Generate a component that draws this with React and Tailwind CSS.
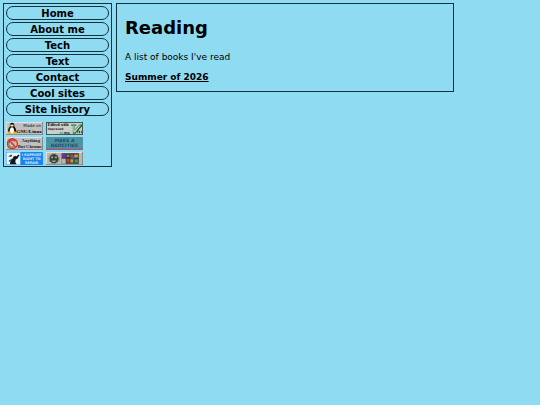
import React from "react";

const links = ["Home", "About me", "Tech", "Text", "Contact", "Cool sites", "Site history"];

function Badge({ label, children }) {
  return (
    <a href="#" aria-label={label} className="block">
      <svg viewBox="0 0 88 31" className="block w-[37px] h-[13px]">
        {children}
      </svg>
    </a>
  );
}

function Bevel({ fill = "#c0c0c0" }) {
  return (
    <>
      <rect width="88" height="31" fill="#707478" />
      <rect width="86" height="29" fill="#e8e8e8" />
      <rect x="2" y="2" width="84" height="27" fill={fill} />
    </>
  );
}

function LinuxBadge() {
  return (
    <Badge label="Made on GNU/Linux">
      <Bevel />
      <path d="M14 2c5 0 6 4 6 9 3 4 5 8 4 14H5c-1-6 1-10 4-14 0-5 1-9 5-9z" fill="#111" />
      <ellipse cx="14" cy="20" rx="5" ry="7" fill="#fff" />
      <circle cx="12" cy="8" r="2" fill="#fff" />
      <circle cx="16" cy="8" r="2" fill="#fff" />
      <path d="M10 11h8l-4 4z" fill="#f2b01e" />
      <path d="M3 27l4-6 5 5-2 3H4zM25 27l-4-6-4 5 1 3h6z" fill="#f2b01e" />
      <text x="84" y="11" textAnchor="end" fontSize="10" fontFamily="DejaVu Sans, sans-serif" fill="#111">Made on</text>
      <text x="85" y="27" textAnchor="end" fontSize="12" fontWeight="bold" fontFamily="Liberation Serif, serif" fill="#000">GNU/Linux</text>
    </Badge>
  );
}

function EditorBadge() {
  return (
    <Badge label="Edited with Improved Vi">
      <rect width="88" height="31" fill="#33423c" />
      <rect x="2" y="2" width="84" height="27" fill="#c9cfcb" />
      <path d="M60 6h12v3h-3v8L80 6h6v4L70 28h-6V9h-4z" fill="#176c2c" />
      <path d="M65 8h3v12L80 8h3L69 25h-4z" fill="#cbd5cd" />
      <path d="M75 19h2v8h-2zM79 21h2v6h-2zM83 21h2v6h-2z" fill="#123d1d" />
      <text x="4" y="10" fontSize="10" fontWeight="bold" fontFamily="Liberation Serif, serif" fill="#000">Edited with</text>
      <text x="4" y="19" fontSize="7" fontWeight="bold" fontFamily="DejaVu Sans, sans-serif" fill="#111">Improved</text>
      <text x="32" y="28" fontSize="7" fontWeight="bold" fontFamily="DejaVu Sans, sans-serif" fill="#111">
        <tspan fill="#139a35">Vi</tspan> IMp
      </text>
    </Badge>
  );
}

function BrowserBadge() {
  return (
    <Badge label="Anything But Chrome">
      <Bevel />
      <circle cx="15" cy="16" r="12" fill="#d9483c" />
      <path d="M4 12a12 12 0 0 0 10 16l5-9-9-1z" fill="#71a873" />
      <path d="M20 10h6a12 12 0 0 1-11 18l6-9z" fill="#e3c16b" />
      <circle cx="15" cy="16" r="5" fill="#759cd0" stroke="#eee" strokeWidth="2" />
      <circle cx="15" cy="16" r="12" fill="none" stroke="#d33" strokeWidth="3" />
      <path d="M7 7l16 18" stroke="#d33" strokeWidth="3" />
      <text x="59" y="12" textAnchor="middle" fontSize="11" fontWeight="bold" fontFamily="Liberation Serif, serif" fill="#222">Anything</text>
      <text x="57" y="26" textAnchor="middle" fontSize="11" fontWeight="bold" fontFamily="Liberation Serif, serif" fill="#222">But Chrome</text>
    </Badge>
  );
}

function NeocitiesBadge() {
  return (
    <Badge label="Make a Neocities">
      <rect width="88" height="31" fill="#4d929f" />
      <rect y="28" width="88" height="3" fill="#b0506b" />
      <g fontSize="11" fontWeight="bold" fontStyle="italic" fontFamily="DejaVu Sans, sans-serif" fill="#214a75" textAnchor="middle">
        <text x="44" y="12">MAKE A</text>
        <text x="44" y="25">NEOCITIES</text>
      </g>
    </Badge>
  );
}

function RepairBadge() {
  return (
    <Badge label="I support right to repair">
      <rect width="88" height="31" fill="#1b83ee" />
      <rect x="1" y="1" width="33" height="29" fill="#e9f5fd" />
      <path d="M9 29l2-8 4-5 3-5 4-2 2 2 6-5 2 2-5 8-4 2-1 6 3 5z" fill="#101820" />
      <path d="M5 10l8-4 2 3-4 3zM6 21l8-5 1 3-7 5z" fill="#3a444c" />
      <g fontSize="8" fontWeight="bold" fontFamily="DejaVu Sans, sans-serif" fill="#d7eaff" textAnchor="middle">
        <text x="61" y="9">I SUPPORT</text>
        <text x="61" y="19">RIGHT TO</text>
        <text x="61" y="28">REPAIR</text>
      </g>
    </Badge>
  );
}

function BlocksBadge() {
  return (
    <Badge label="Blocks">
      <Bevel fill="#b9b6ae" />
      <circle cx="19" cy="16" r="11" fill="#33413b" />
      <circle cx="19" cy="16" r="12" fill="none" stroke="#a06c4b" strokeWidth="2" strokeDasharray="4 3" />
      <path d="M12 11h5v4h-5zM21 11h5v4h-5zM13 20h12l-4 4h-5z" fill="#7fb3a5" />
      <rect x="37" y="3" width="41" height="25" fill="#38343c" />
      <path d="M38 4h9v10h-9z" fill="#7b28a5" />
      <path d="M49 6h7v6h-7zM68 17h8v8h-8z" fill="#3c9f4b" />
      <path d="M58 6h7v8h-7zM49 16h7v9h-7z" fill="#b94438" />
      <path d="M67 6h9v7h-9zM58 17h7v8h-7z" fill="#d69b35" />
      <path d="M38 4h3v3h-3zM60 11h8v5h-8z" fill="#3568bd" />
      <rect x="37" y="16" width="10" height="12" fill="#b9b6ae" />
    </Badge>
  );
}

function App() {
  return (
    <div className="min-h-screen bg-[#8edbf2] text-black font-['DejaVu_Sans',sans-serif] flex items-start gap-1 p-[3px]">
      <nav className="w-[109px] shrink-0 border border-[#10323c] px-[2px] pt-[2px] pb-px">
        <ul className="flex flex-col gap-[2px]">
          {links.map((name) => (
            <li key={name}>
              <a href="#" className="block h-[14px] rounded-full border border-[#10323c] text-center text-[10px] leading-[13px] font-bold">
                {name}
              </a>
            </li>
          ))}
        </ul>
        <div className="mt-[6px] flex flex-wrap gap-x-[3px] gap-y-[2px]">
          <LinuxBadge />
          <EditorBadge />
          <BrowserBadge />
          <NeocitiesBadge />
          <RepairBadge />
          <BlocksBadge />
        </div>
      </nav>

      <main className="flex-1 max-w-[338px] border border-[#10323c] px-2 pt-3 pb-2">
        <h1 className="text-[18px] leading-6 font-bold">Reading</h1>
        <p className="mt-[11px] text-[9px] leading-3">A list of books I've read</p>
        <p className="mt-2 text-[9px] leading-3 font-bold">
          <a href="#" className="underline">Summer of 2026</a>
        </p>
      </main>
    </div>
  );
}

export default App;
